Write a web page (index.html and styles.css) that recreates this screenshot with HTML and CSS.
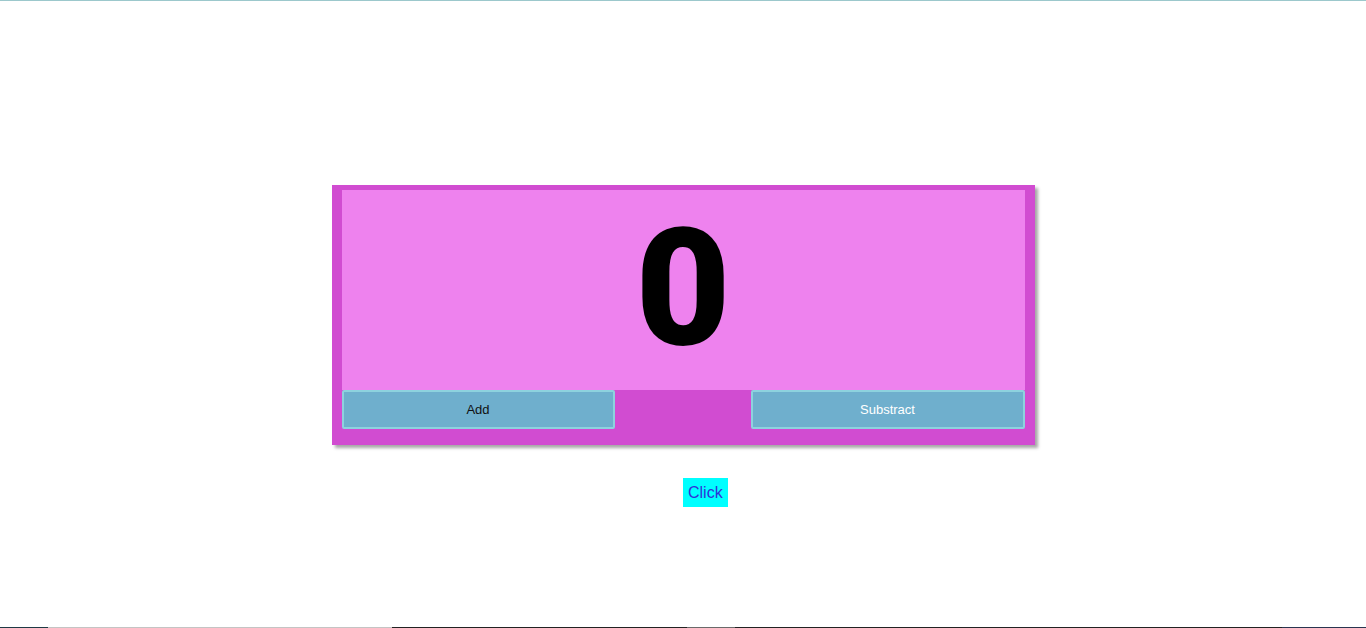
FILE: index.html
```html
<!DOCTYPE html>
<html lang="en">
<head>
<meta charset="utf-8">
<title>Counter</title>
<link rel="stylesheet" href="styles.css">
</head>
<body>
<div class="page">
  <main class="main">
    <section class="card">
      <div class="display">0</div>
      <div class="actions">
        <button class="btn btn-add">Add</button>
        <button class="btn btn-sub">Substract</button>
      </div>
    </section>
    <div class="click-row">
      <button class="click">Click</button>
    </div>
  </main>
  <div class="taskbar">
    <span class="seg s1"></span>
    <span class="seg s2"></span>
    <span class="seg s3"></span>
    <span class="seg s4"></span>
    <span class="seg s5"></span>
    <span class="seg s6"></span>
  </div>
</div>
</body>
</html>
```

FILE: styles.css
```css
html, body {
  margin: 0;
  padding: 0;
  background: #ffffff;
}

.page {
  height: 628px;
  box-sizing: border-box;
  border-top: 1px solid #9cc8cc;
  display: flex;
  flex-direction: column;
  font-family: "Liberation Sans", Arial, sans-serif;
}

.main {
  flex: 1;
  padding-top: 184px;
}

.card {
  width: 683px;
  margin: 0 auto;
  padding: 5px 10px 16px 10px;
  background: #d14cd1;
  box-shadow: 3px 3px 3px rgba(0, 0, 0, 0.35);
}

.display {
  height: 200px;
  background: #ee82ee;
  color: #000;
  font-family: Roboto, "Liberation Sans", sans-serif;
  font-weight: 900;
  font-size: 164px;
  line-height: 196px;
  text-align: center;
}

.actions {
  display: flex;
  justify-content: space-between;
}

.btn {
  height: 39px;
  margin: 0;
  padding: 0;
  background: #6fafcd;
  border: 2px solid #8dd2de;
  border-radius: 2px;
  font-family: "Liberation Sans", Arial, sans-serif;
  font-size: 13px;
  cursor: pointer;
}

.btn-add {
  width: 273px;
  color: #111;
}

.btn-sub {
  width: 274px;
  color: #ffffff;
}

.click-row {
  margin-top: 33px;
}

.click {
  margin: 0 0 0 683px;
  padding: 5px 5px;
  background: #00ffff;
  border: none;
  color: #3030d8;
  font-family: "Liberation Sans", Arial, sans-serif;
  font-size: 16px;
  line-height: 19px;
}

.taskbar {
  height: 1px;
  display: flex;
}

.seg { display: block; height: 1px; }
.s1 { width: 48px; background: #1f3a44; }
.s2 { width: 344px; background: #c4c4c4; }
.s3 { width: 295px; background: #222222; }
.s4 { width: 48px; background: #6a6a6a; }
.s5 { width: 547px; background: #222222; }
.s6 { flex: 1; background: #2a3550; }
```
